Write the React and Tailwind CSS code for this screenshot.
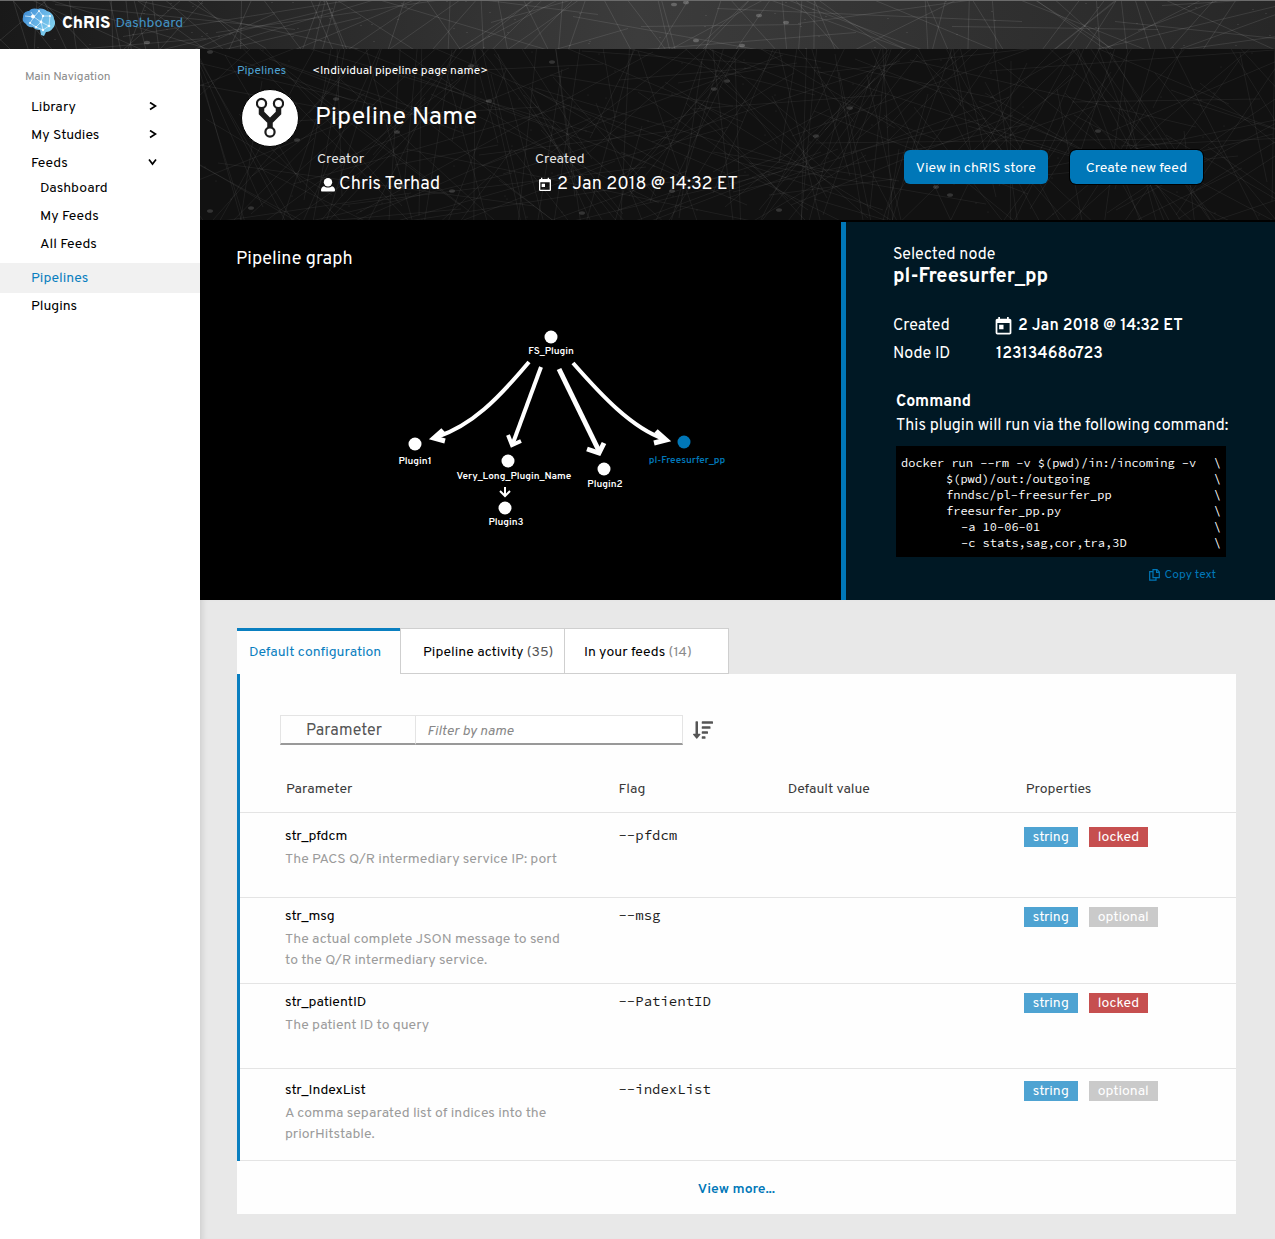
import React from "react";
import { MdToday } from "react-icons/md";
import { FaSortAmountDown } from "react-icons/fa";

/* Deterministic pseudo-random generator used by the header artwork. */
function createRandom(seed) {
  let s = seed;
  return () => {
    s = (s * 1664525 + 1013904223) % 4294967296;
    return s / 4294967296;
  };
}

function buildWeb(seed, width, height, lineCount, dotCount) {
  const rand = createRandom(seed);
  const lines = [];
  for (let i = 0; i < lineCount; i += 1) {
    const cx = rand() * width;
    const cy = rand() * height;
    const angle = rand() * Math.PI;
    const len = 50 + rand() * 130;
    lines.push({
      x1: Math.round(cx - Math.cos(angle) * len),
      y1: Math.round(cy - Math.sin(angle) * len),
      x2: Math.round(cx + Math.cos(angle) * len),
      y2: Math.round(cy + Math.sin(angle) * len),
    });
  }
  const dots = [];
  for (let i = 0; i < dotCount; i += 1) {
    dots.push({
      x: Math.round(rand() * width),
      y: Math.round(rand() * height),
      r: rand() > 0.85 ? 3 : 0.7,
    });
  }
  return { lines, dots };
}

const topWeb = buildWeb(7, 1275, 49, 120, 90);
const heroWeb = buildWeb(42, 1075, 171, 280, 130);

function Web({ web, width, height, lineOpacity, dotOpacity }) {
  return (
    <svg
      className="absolute inset-0 h-full w-full"
      viewBox={`0 0 ${width} ${height}`}
      preserveAspectRatio="xMidYMid slice"
      aria-hidden="true"
    >
      <g stroke="#fff" strokeOpacity={lineOpacity} strokeWidth="1">
        {web.lines.map((l, i) => (
          <line key={i} x1={l.x1} y1={l.y1} x2={l.x2} y2={l.y2} />
        ))}
      </g>
      <g fill="#fff" fillOpacity={dotOpacity}>
        {web.dots.map((d, i) => (
          <ellipse key={i} cx={d.x} cy={d.y} rx={d.r} ry={d.r * 0.6} />
        ))}
      </g>
    </svg>
  );
}

function BrainLogo() {
  return (
    <svg width="34" height="28" viewBox="0 0 34 28" aria-hidden="true">
      <defs>
        <linearGradient id="brain" x1="0" y1="0" x2="1" y2="0.6">
          <stop offset="0" stopColor="#3a86d0" />
          <stop offset="0.5" stopColor="#63b0e6" />
          <stop offset="1" stopColor="#7fd0ee" />
        </linearGradient>
      </defs>
      <path
        d="M1 9C1 5 4 3 7 3C9 0 13 0 16 1C19 0 23 1 25 3C29 4 32 7 32 11C34 14 33 18 31 20C29 23 26 24 24 24L22 28L19 27L18 22C15 22 12 21 11 19C8 20 5 18 4 16C1 14 0 12 1 9Z"
        fill="url(#brain)"
      />
      <path
        d="M3 8L12 9L17 3L21 8L28 8M12 9L8 15L14 19L19 14L21 8M19 14L27 18L28 8M19 14L12 9M14 19L21 22L27 18M12 9L9 4M21 22L19 14"
        fill="none"
        stroke="#e4f4fd"
        strokeWidth="0.7"
      />
      <g fill="#fff">
        <circle cx="11" cy="8.500" r="2" />
        <circle cx="21" cy="8" r="1.200" />
        <circle cx="19" cy="14" r="1.400" />
        <circle cx="27" cy="18" r="1.300" />
        <circle cx="28" cy="8" r="1" />
        <circle cx="14" cy="19" r="1" />
        <circle cx="21" cy="22" r="1.200" />
        <circle cx="17" cy="3" r="0.900" />
        <circle cx="8" cy="15" r="1" />
      </g>
    </svg>
  );
}

function ForkIcon() {
  return (
    <svg width="28" height="42" viewBox="0 0 28 42" fill="none" stroke="#1b1b1b" aria-hidden="true">
      <path d="M5.500 10V16L14 24.500L22.500 16V10M14 24V32" strokeWidth="5.500" />
      <circle cx="5.500" cy="6.500" r="4.600" strokeWidth="2.200" fill="#fff" />
      <circle cx="22.500" cy="6.500" r="4.600" strokeWidth="2.200" fill="#fff" />
      <circle cx="14" cy="35" r="4.600" strokeWidth="2.200" fill="#fff" />
    </svg>
  );
}

function UserIcon() {
  return (
    <svg width="14" height="14" viewBox="0 0 14 14" fill="#fff" aria-hidden="true">
      <circle cx="7" cy="4.200" r="4.200" />
      <path d="M3 8.200C4 9 5.500 9.500 7 9.500S10 9 11 8.200C13 8.700 14 10.500 14 12C14 13 13.500 13.500 13 13.500H1C0.500 13.500 0 13 0 12C0 10.500 1 8.700 3 8.200Z" />
    </svg>
  );
}

function CopyIcon() {
  return (
    <svg width="11" height="12" viewBox="0 0 11 12" fill="none" stroke="#0077b8" strokeWidth="1.200" aria-hidden="true">
      <path d="M4 0.700H8L10.300 3V8.600H4Z" />
      <path d="M7.600 0.700V3.300H10.300" />
      <path d="M4 2.700H0.700V11.200H7V8.600" />
    </svg>
  );
}

function Chevron({ open }) {
  return (
    <svg className="mb-1" width="9" height="9" viewBox="0 0 9 9" fill="none" stroke="#000" strokeWidth="1.700" aria-hidden="true">
      {open ? <path d="M1 1.500L4.500 6L8 1.500" /> : <path d="M2 0.500L7.500 4L2 7.500" />}
    </svg>
  );
}

function NavLink({ children, chevron }) {
  return (
    <a href="#" className="flex items-center justify-between pl-[31px] pr-[43px] leading-5">
      {children}
      {chevron && <Chevron open={chevron === "open"} />}
    </a>
  );
}

function Sidebar() {
  return (
    <nav className="w-[200px] shrink-0 bg-white pt-[18px] text-[14px] text-black">
      <h2 className="pl-[25px] text-[12px] leading-5 text-[#8b8b8b]">Main Navigation</h2>
      <div className="mt-[11px] flex flex-col gap-2">
        <NavLink chevron="closed">Library</NavLink>
        <NavLink chevron="closed">My Studies</NavLink>
        <NavLink chevron="open">Feeds</NavLink>
      </div>
      <div className="mt-[5px] flex flex-col gap-2 pl-[9px]">
        <NavLink>Dashboard</NavLink>
        <NavLink>My Feeds</NavLink>
        <NavLink>All Feeds</NavLink>
      </div>
      <a href="#" aria-current="page" className="mt-2 flex h-[30px] items-center bg-[#f1f1f1] pl-[31px] text-[#0a7fc0]">
        Pipelines
      </a>
      <div className="mt-1">
        <NavLink>Plugins</NavLink>
      </div>
    </nav>
  );
}

function Hero() {
  return (
    <section className="relative h-[171px] overflow-hidden bg-[#111111] text-white">
      <Web web={heroWeb} width={1075} height={171} lineOpacity="0.06" dotOpacity="0.15" />
      <div className="relative pl-[37px] pt-3">
        <div className="flex gap-[26px] text-[12px] leading-5">
          <a href="#" className="text-[#4fa3d3]">Pipelines</a>
          <span>&lt;Individual pipeline page name&gt;</span>
        </div>
        <div className="flex pr-[72px]">
          <div className="ml-1 mt-2 flex size-[58px] shrink-0 items-center justify-center rounded-full border border-black bg-white">
            <ForkIcon />
          </div>
          <div className="ml-4 flex flex-1 flex-col">
            <h1 className="mt-[21px] text-[25px] leading-8">Pipeline Name</h1>
            <div className="mt-4 flex items-start">
              <dl className="w-[220px] pl-0.5">
                <dt className="text-[14px] leading-5 text-[#e6e6e6]">Creator</dt>
                <dd className="mt-[3px] flex items-center gap-1 pl-1 text-[18px] leading-6">
                  <UserIcon />
                  Chris Terhad
                </dd>
              </dl>
              <dl>
                <dt className="text-[14px] leading-5 text-[#e6e6e6]">Created</dt>
                <dd className="mt-[3px] flex items-center gap-1 pl-0.5 text-[18px] leading-6">
                  <MdToday size={16} />
                  2 Jan 2018 @ 14:32 ET
                </dd>
              </dl>
              <div className="ml-auto flex gap-[22px]">
                <button className="h-[34px] rounded-md bg-[#0077b8] px-3 pt-0.5 text-[14px]">
                  View in chRIS store
                </button>
                <button className="h-[34px] rounded-md bg-[#0077b8] px-4 pt-0.5 text-[14px] outline outline-black">
                  Create new feed
                </button>
              </div>
            </div>
          </div>
        </div>
      </div>
    </section>
  );
}

const nodes = [
  { x: 551, y: 337, tx: 551, ty: 354, label: "FS_Plugin" },
  { x: 415, y: 444, tx: 415, ty: 464, label: "Plugin1" },
  { x: 508, y: 461, tx: 514, ty: 479, label: "Very_Long_Plugin_Name" },
  { x: 505, y: 508, tx: 506, ty: 525, label: "Plugin3" },
  { x: 604, y: 469, tx: 605, ty: 487, label: "Plugin2" },
  { x: 684, y: 442, tx: 687, ty: 463, label: "pl-Freesurfer_pp", selected: true },
];

function PipelineGraph() {
  return (
    <svg width="350" height="210" viewBox="390 325 350 210" role="img" aria-label="Pipeline graph">
      <g fill="none" stroke="#fff" strokeWidth="4">
        <path d="M529 362C497 400 472 425 437 437" />
        <path d="M443 430L434 438L445 441" strokeWidth="5" />
        <path d="M541 367L513 443" />
        <path d="M508 435L512 445L521 441" />
        <path d="M559 369L599 451" strokeWidth="5" />
        <path d="M587 449L599 453L604 443" strokeWidth="5" />
        <path d="M573 363C602 396 632 428 664 439" />
        <path d="M656 431L666 440L654 443" strokeWidth="5" />
        <path d="M505 487V495M500 491L505 496L510 491" strokeWidth="2" />
      </g>
      {nodes.map((n) => (
        <g key={n.label} fill={n.selected ? "#0077b8" : "#fff"}>
          <circle cx={n.x} cy={n.y} r="6.500" />
          <text x={n.tx} y={n.ty} textAnchor="middle" className="text-[10px] font-semibold">
            {n.label}
          </text>
        </g>
      ))}
    </svg>
  );
}

const commandLines = [
  { text: "docker run --rm -v $(pwd)/in:/incoming -v", indent: "" },
  { text: "$(pwd)/out:/outgoing", indent: "pl-[45px]" },
  { text: "fnndsc/pl-freesurfer_pp", indent: "pl-[45px]" },
  { text: "freesurfer_pp.py", indent: "pl-[45px]" },
  { text: "-a 10-06-01", indent: "pl-[60px]" },
  { text: "-c stats,sag,cor,tra,3D", indent: "pl-[60px]" },
];

function NodePanel() {
  return (
    <aside className="w-[434px] shrink-0 border-l-[5px] border-[#0077b8] bg-[#001824] pb-[15px] pl-[47px] pr-[49px] pt-[21px] text-white">
      <p className="text-[16px] leading-6">Selected node</p>
      <h2 className="text-[20px] font-bold leading-5">pl-Freesurfer_pp</h2>
      <dl className="mt-[27px] grid grid-cols-[100px_1fr] gap-y-1 text-[16px] leading-6">
        <dt>Created</dt>
        <dd className="flex items-center gap-1 font-semibold">
          <MdToday size={21} />
          2 Jan 2018 @ 14:32 ET
        </dd>
        <dt>Node ID</dt>
        <dd className="pl-[3px] font-semibold">12313468o723</dd>
      </dl>
      <div className="mt-6 pl-[3px]">
        <h3 className="text-[16px] font-bold leading-6">Command</h3>
        <p className="whitespace-nowrap text-[16px] leading-6">This plugin will run via the following command:</p>
        <pre className="mt-2 h-[111px] bg-black px-[5px] pt-[9px] text-[12px] leading-[16px]">
          {commandLines.map((l) => (
            <code key={l.text} className="flex justify-between font-['Source_Code_Pro','Overpass_Mono','DejaVu_Sans_Mono',monospace]">
              <span className={l.indent}>{l.text}</span>
              <span>\</span>
            </code>
          ))}
        </pre>
        <button className="ml-auto mt-2 flex items-center gap-[5px] pr-[10px] text-[12px] leading-5 text-[#0077b8]">
          <CopyIcon />
          Copy text
        </button>
      </div>
    </aside>
  );
}

const parameters = [
  {
    name: "str_pfdcm",
    flag: "--pfdcm",
    lines: ["The PACS Q/R intermediary service IP: port"],
    status: "locked",
    row: "h-[85px]",
    pad: "pt-3",
  },
  {
    name: "str_msg",
    flag: "--msg",
    lines: ["The actual complete JSON message to send", "to the Q/R intermediary service."],
    status: "optional",
    row: "h-[86px]",
    pad: "pt-[7px]",
  },
  {
    name: "str_patientID",
    flag: "--PatientID",
    lines: ["The patient ID to query"],
    status: "locked",
    row: "h-[85px]",
    pad: "pt-[7px]",
  },
  {
    name: "str_IndexList",
    flag: "--indexList",
    lines: ["A comma separated list of indices into the", "priorHitstable."],
    status: "optional",
    row: "h-[92px]",
    pad: "pt-2.5",
  },
];

function Badge({ kind }) {
  const color = kind === "string" ? "bg-[#4ea3d2]" : kind === "locked" ? "bg-[#c64f4f]" : "bg-[#cacaca]";
  return <span className={`${color} px-[9px] pt-0.5 text-[14px] leading-[18px] text-white`}>{kind}</span>;
}

function ParameterTable() {
  return (
    <table className="w-full table-fixed text-left text-[14px]">
      <thead>
        <tr className="h-[47px] border-b border-[#e4e4e4] text-[#3a3a3a]">
          <th className="w-[38%] pl-[46px] pt-0.5 font-normal">Parameter</th>
          <th className="w-[17%] pt-0.5 font-normal">Flag</th>
          <th className="w-[236px] pt-0.5 font-normal">Default value</th>
          <th className="pl-0.5 pt-0.5 font-normal">Properties</th>
        </tr>
      </thead>
      <tbody>
        {parameters.map((p) => (
          <tr key={p.name} className={`${p.row} border-b border-[#e4e4e4] align-top`}>
            <td className={`${p.pad} pl-[45px]`}>
              <div className="leading-6 text-black">{p.name}</div>
              <p className="leading-[21px] text-[#9b9b9b]">
                {p.lines.map((line) => (
                  <span key={line} className="block">{line}</span>
                ))}
              </p>
            </td>
            <td className={`${p.pad} font-['Source_Code_Pro','Overpass_Mono','DejaVu_Sans_Mono',monospace] leading-5 text-[#1a1a1a]`}>{p.flag}</td>
            <td />
            <td className={p.pad}>
              <div className="flex h-6 items-center gap-[11px]">
                <Badge kind="string" />
                <Badge kind={p.status} />
              </div>
            </td>
          </tr>
        ))}
      </tbody>
    </table>
  );
}

function Configuration() {
  return (
    <section className="bg-[#e8e8e8] pb-[26px] pl-[37px] pr-[39px] pt-7 shadow-[inset_6px_0_6px_-4px_rgba(0,0,0,0.12)]">
      <div role="tablist" className="flex text-[14px]">
        <button role="tab" aria-selected="true" className="h-[46px] w-[163px] border-t-[3px] border-[#0a7fc0] bg-[#fefefe] pl-3 text-left text-[#0a7fc0]">
          Default configuration
        </button>
        <button role="tab" aria-selected="false" className="h-[46px] w-[165px] border border-[#cfcfcf] bg-white pl-[22px] pt-0.5 text-left text-black">
          Pipeline activity <span className="text-[#555555]">(35)</span>
        </button>
        <button role="tab" aria-selected="false" className="h-[46px] w-[164px] border border-l-0 border-[#cfcfcf] bg-white pl-[19px] pt-0.5 text-left text-black">
          In your feeds <span className="text-[#8b8b8b]">(14)</span>
        </button>
      </div>
      <div className="bg-[#fefefe]">
        <div className="border-l-[3px] border-[#0a7fc0] pt-[41px]">
          <div className="flex items-center pl-10">
            <button className="h-[30px] w-[136px] border border-b-2 border-[#e4e4e4] border-b-[#999999] pr-2 pt-0.5 text-[16px] leading-6 text-[#555555]">
              Parameter
            </button>
            <input
              type="text"
              aria-label="Filter by name"
              placeholder="Filter by name"
              className="h-[30px] w-[267px] border border-b-2 border-l-0 border-[#e4e4e4] border-b-[#999999] bg-white pl-[11px] pt-1 text-[14px] placeholder:italic placeholder:text-[#888888]"
            />
            <button aria-label="Sort" className="ml-[10px] text-[#555555]">
              <FaSortAmountDown size={20} />
            </button>
          </div>
          <div className="pt-5">
            <ParameterTable />
          </div>
        </div>
        <div className="flex h-[53px] items-center justify-center pt-1">
          <a href="#" className="text-[14px] font-semibold text-[#0077b8]">View more...</a>
        </div>
      </div>
    </section>
  );
}

export default function App() {
  return (
    <div className="flex min-h-screen flex-col bg-white font-['Overpass',Roboto,sans-serif]">
      <header className="relative h-[49px] overflow-hidden border-t border-[#6b6b6b] bg-linear-to-r from-[#191919] via-[#3c3c3c] to-[#272727]">
        <Web web={topWeb} width={1275} height={49} lineOpacity="0.1" dotOpacity="0.22" />
        <div className="relative flex items-center gap-[6px] pl-[22px] pt-[7px]">
          <BrainLogo />
          <div className="flex gap-[5px] pt-1">
            <span className="text-[17px] font-extrabold leading-6 text-white">ChRIS</span>
            <span className="text-[14px] leading-6 text-[#4293c4]">Dashboard</span>
          </div>
        </div>
      </header>
      <div className="flex flex-1">
        <Sidebar />
        <main className="flex min-w-0 flex-1 flex-col">
          <Hero />
          <div className="flex border-t-2 border-black">
            <section className="flex-1 bg-black pl-[36px] pt-[26px] text-white">
              <h2 className="text-[18px] leading-6">Pipeline graph</h2>
              <div className="pl-[154px] pt-[53px]">
                <PipelineGraph />
              </div>
            </section>
            <NodePanel />
          </div>
          <div className="flex-1 bg-[#e8e8e8]">
            <Configuration />
          </div>
        </main>
      </div>
    </div>
  );
}
